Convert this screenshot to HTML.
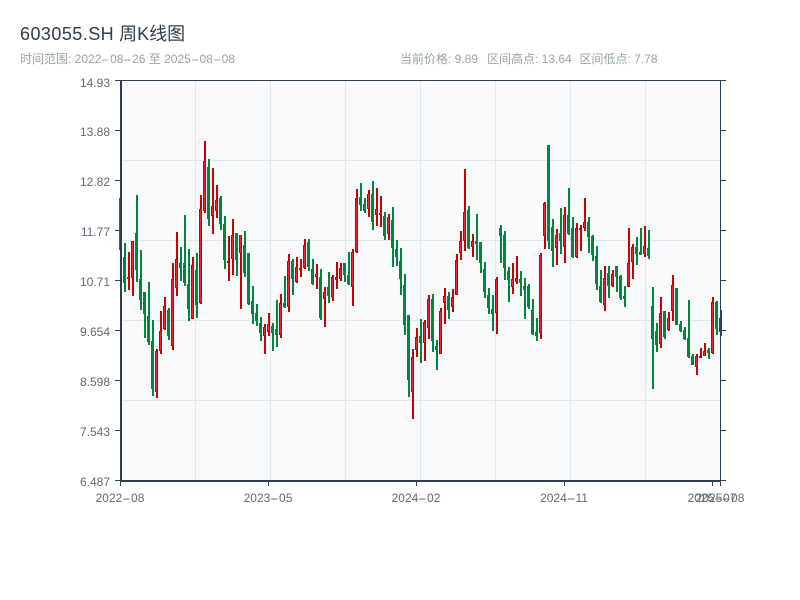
<!DOCTYPE html>
<html lang="zh">
<head>
<meta charset="utf-8">
<title>603055.SH 周K线图</title>
<style>
html,body{margin:0;padding:0;background:#fff;width:800px;height:600px;overflow:hidden}
svg{display:block;position:absolute;left:0;top:0}
.t{position:absolute;white-space:nowrap;font-family:"Liberation Sans","WenQuanYi Zen Hei","Noto Sans CJK SC",sans-serif;font-size:12px;line-height:12px;height:12px;color:#95a5a6}
.ttl{left:20px;top:25px;font-size:18px;line-height:18px;height:18px;color:#2c3e50}
.ttl b{font-weight:normal;letter-spacing:.45px}
.y{left:50px;width:60px;text-align:right;color:#5f6b76}
.x{width:80px;text-align:center;color:#5f6b76;top:492px}
.d{display:inline-block;width:8.7px;text-align:left;transform:scaleX(2.17);transform-origin:0 50%}
</style>
</head>
<body>
<svg xmlns="http://www.w3.org/2000/svg" width="800" height="600" viewBox="0 0 800 600">
<rect width="800" height="600" fill="#fff"/>
<rect x="121" y="80" width="600" height="401" fill="#f8f9fa"/>
<g stroke="#e4e7ec" stroke-width="1">
<path d="M121 160.500H720M121 240.500H720M121 320.500H720M121 400.500H720"/>
<path d="M195.500 81V481M270.500 81V481M345.500 81V481M420.500 81V481M495.500 81V481M570.500 81V481M645.500 81V481"/>
</g>
<g id="candles"></g>
<g fill="none" stroke="#2c3e50">
<path d="M121 80.500H720M720.500 80V481" stroke-width="1"/>
<path d="M121 80V482M120 481H721" stroke-width="2"/>
<path stroke-width="1" d="M115 80.500H121M115 130.500H121M115 180.500H121M115 230.500H121M115 280.500H121M115 330.500H121M115 380.500H121M115 430.500H121M115 480.500H121"/>
<path stroke-width="1" d="M720 80.500H726M720 130.500H726M720 180.500H726M720 230.500H726M720 280.500H726M720 330.500H726M720 380.500H726M720 430.500H726M720 480.500H726"/>
<path stroke-width="1" d="M120.500 481V486M268.500 481V486M416.500 481V486M564.500 481V486M712.500 481V486M720.500 481V486"/>
</g>
</svg>
<div class="t ttl"><b>603055.SH</b> 周K线图</div>
<div class="t" style="left:20px;top:53px">时间范围: 2022<span class="d">-</span>08<span class="d">-</span>26 至 2025<span class="d">-</span>08<span class="d">-</span>08</div>
<div class="t" style="left:400px;top:53px">当前价格: 9.89</div>
<div class="t" style="left:487px;top:53px">区间高点: 13.64</div>
<div class="t" style="left:579.500px;top:53px">区间低点: 7.78</div>
<div class="t y" style="top:77px">14.93</div>
<div class="t y" style="top:126px">13.88</div>
<div class="t y" style="top:176px">12.82</div>
<div class="t y" style="top:226px">11.77</div>
<div class="t y" style="top:276px">10.71</div>
<div class="t y" style="top:326px">9.654</div>
<div class="t y" style="top:376px">8.598</div>
<div class="t y" style="top:426px">7.543</div>
<div class="t y" style="top:476px">6.487</div>
<div class="t x" style="left:80px">2022<span class="d">-</span>08</div>
<div class="t x" style="left:228px">2023<span class="d">-</span>05</div>
<div class="t x" style="left:376px">2024<span class="d">-</span>02</div>
<div class="t x" style="left:524px">2024<span class="d">-</span>11</div>
<div class="t x" style="left:672px">2025<span class="d">-</span>07</div>
<div class="t x" style="left:680px">2025<span class="d">-</span>08</div>
<script>
var S=[
[130,[[0,205,360,205,360],[0,340,485,380,458],[1,366,480,442,446],[1,334,497,334,443],[0,195,455,310,420],[0,360,540,447,510],[0,486,624,486,552],[0,456,645,558,636],[0,570,797,633,777],[1,657,804,663,785],[1,543,672,603,662],[1,501,600,528,597],[0,534,630,540,618],[1,399,660,447,647],[1,306,498,387,473],[0,351,453,400,414],[0,255,468,400,458],[0,357,573,462,537],[1,381,567,405,566],[0,369,564,420,525],[1,195,522,237,520],[1,33,249,93,243],[0,87,288,111,267],[1,114,312,228,258],[1,165,264,210,242],[0,198,300,204,282],[0,258,417,282,390],[1,318,453,393,399],[1,267,435,315,387],[0,309,438,309,390],[1,315,537,315,369],[0,303,441,345,430],[0,369,525,369,522],[0,468,582,513,552],[0,522,588,549,573],[0,561,633,579,609],[1,582,672,591,618],[1,549,618,582,606]]],
[170,[[0,459,543,468,489],[0,390,531,477,495],[1,372,504,399,495],[0,318,414,399,411],[1,252,426,273,411],[0,267,375,273,327],[1,261,339,291,337],[1,267,321,294,299],[1,207,297,225,295],[0,207,303,216,291],[0,267,345,297,342],[1,282,357,313,320],[0,297,450,321,444],[1,351,471,367,387],[0,306,399,351,378],[1,315,393,321,381],[1,276,357,321,330],[1,279,333,294,327],[0,279,336,279,315],[0,246,345,315,342],[1,237,408,246,350],[1,57,249,84,247],[0,39,123,81,105],[0,84,129,102,123],[1,60,141,72,117],[0,33,180,72,156],[1,54,168,117,135],[1,78,171,129,135],[0,126,210,138,198],[1,132,210,141,192],[0,111,291,150,234],[0,210,288,237,261],[0,234,375,273,327],[0,312,495,345,465],[0,435,681,435,630],[1,537,747,561,666]]],
[160,[[1,504,591,531,570],[0,477,609,528,549],[1,480,603,486,550],[1,405,537,417,503],[0,402,576,417,543],[0,540,630,558,570],[1,445,582,453,581],[1,384,492,408,429],[0,396,477,408,450],[1,387,456,411,441],[1,282,405,300,404],[1,213,300,243,278],[1,27,273,156,243],[0,138,267,150,264],[1,222,291,243,261],[0,162,300,243,252],[0,246,339,246,309],[0,306,414,327,396],[0,384,462,405,444],[0,405,513,447,462],[1,351,522,357,459],[0,195,309,204,228],[0,213,360,225,324],[0,321,426,333,360],[1,309,402,357,381],[1,288,372,354,366],[0,333,408,357,369],[0,354,477,378,390],[0,372,447,378,441],[0,417,525,450,522],[0,474,543,516,528],[1,279,537,285,519],[1,126,267,129,228],[0,-45,267,-45,243],[0,177,321,201,273],[1,207,315,225,264],[0,144,282,219,243],[1,141,309,165,261]]],
[140,[[0,144,285,225,282],[0,231,354,264,351],[1,249,354,264,351],[1,255,333,264,270],[1,174,273,246,264],[0,231,339,246,291],[0,285,363,288,345],[0,318,450,348,432],[0,390,489,438,486],[1,378,513,414,495],[0,378,474,399,438],[1,390,441,402,438],[0,378,456,378,411],[0,405,480,408,474],[0,438,501,468,477],[1,264,441,369,440],[1,312,417,321,367],[0,291,375,321,342],[0,264,345,336,345],[1,258,351,318,342],[0,270,357,324,348],[0,441,747,498,597],[0,549,636,573,615],[1,471,624,519,612],[0,513,597,513,591],[1,516,573,534,570],[1,405,543,435,513],[0,444,555,444,555],[0,543,576,552,573],[0,561,600,570,597],[0,480,654,594,651],[0,642,675,648,675],[1,642,705,648,681],[1,624,654,648,654],[1,609,648,633,648],[0,624,657,630,639],[1,471,642,486,639],[0,483,585,486,567],[1,510,588,534,576]]]
];
var g=document.getElementById('candles'),ns='http://www.w3.org/2000/svg',i=0;
function r(x,y,w,h,f,st){
  var e=document.createElementNS(ns,'rect');
  e.setAttribute('x',x);e.setAttribute('y',y);e.setAttribute('width',w);e.setAttribute('height',Math.max(h,1));
  e.setAttribute('fill',f);
  if(st){e.setAttribute('stroke',st);e.setAttribute('stroke-width',1);}
  g.appendChild(e);
}
S.forEach(function(s){
  s[1].forEach(function(d){
    var c=121+4*i,y=function(z){return Math.round(s[0]+z/3);};
    var h=y(d[1]),l=y(d[2]),t=y(d[3]),b=y(d[4]);
    if(d[0]){
      r(c-1,h,2,l-h,'#cc0000');
      r(c-1.5,t+0.5,2,Math.max(b-t-1,1),'#f5222d','#cc0000');
    }else{
      r(c-1,h,2,l-h,'#00873c');
      r(c-2,t,3,b-t,'#00873c');
    }
    i++;
  });
});
</script>
</body>
</html>
